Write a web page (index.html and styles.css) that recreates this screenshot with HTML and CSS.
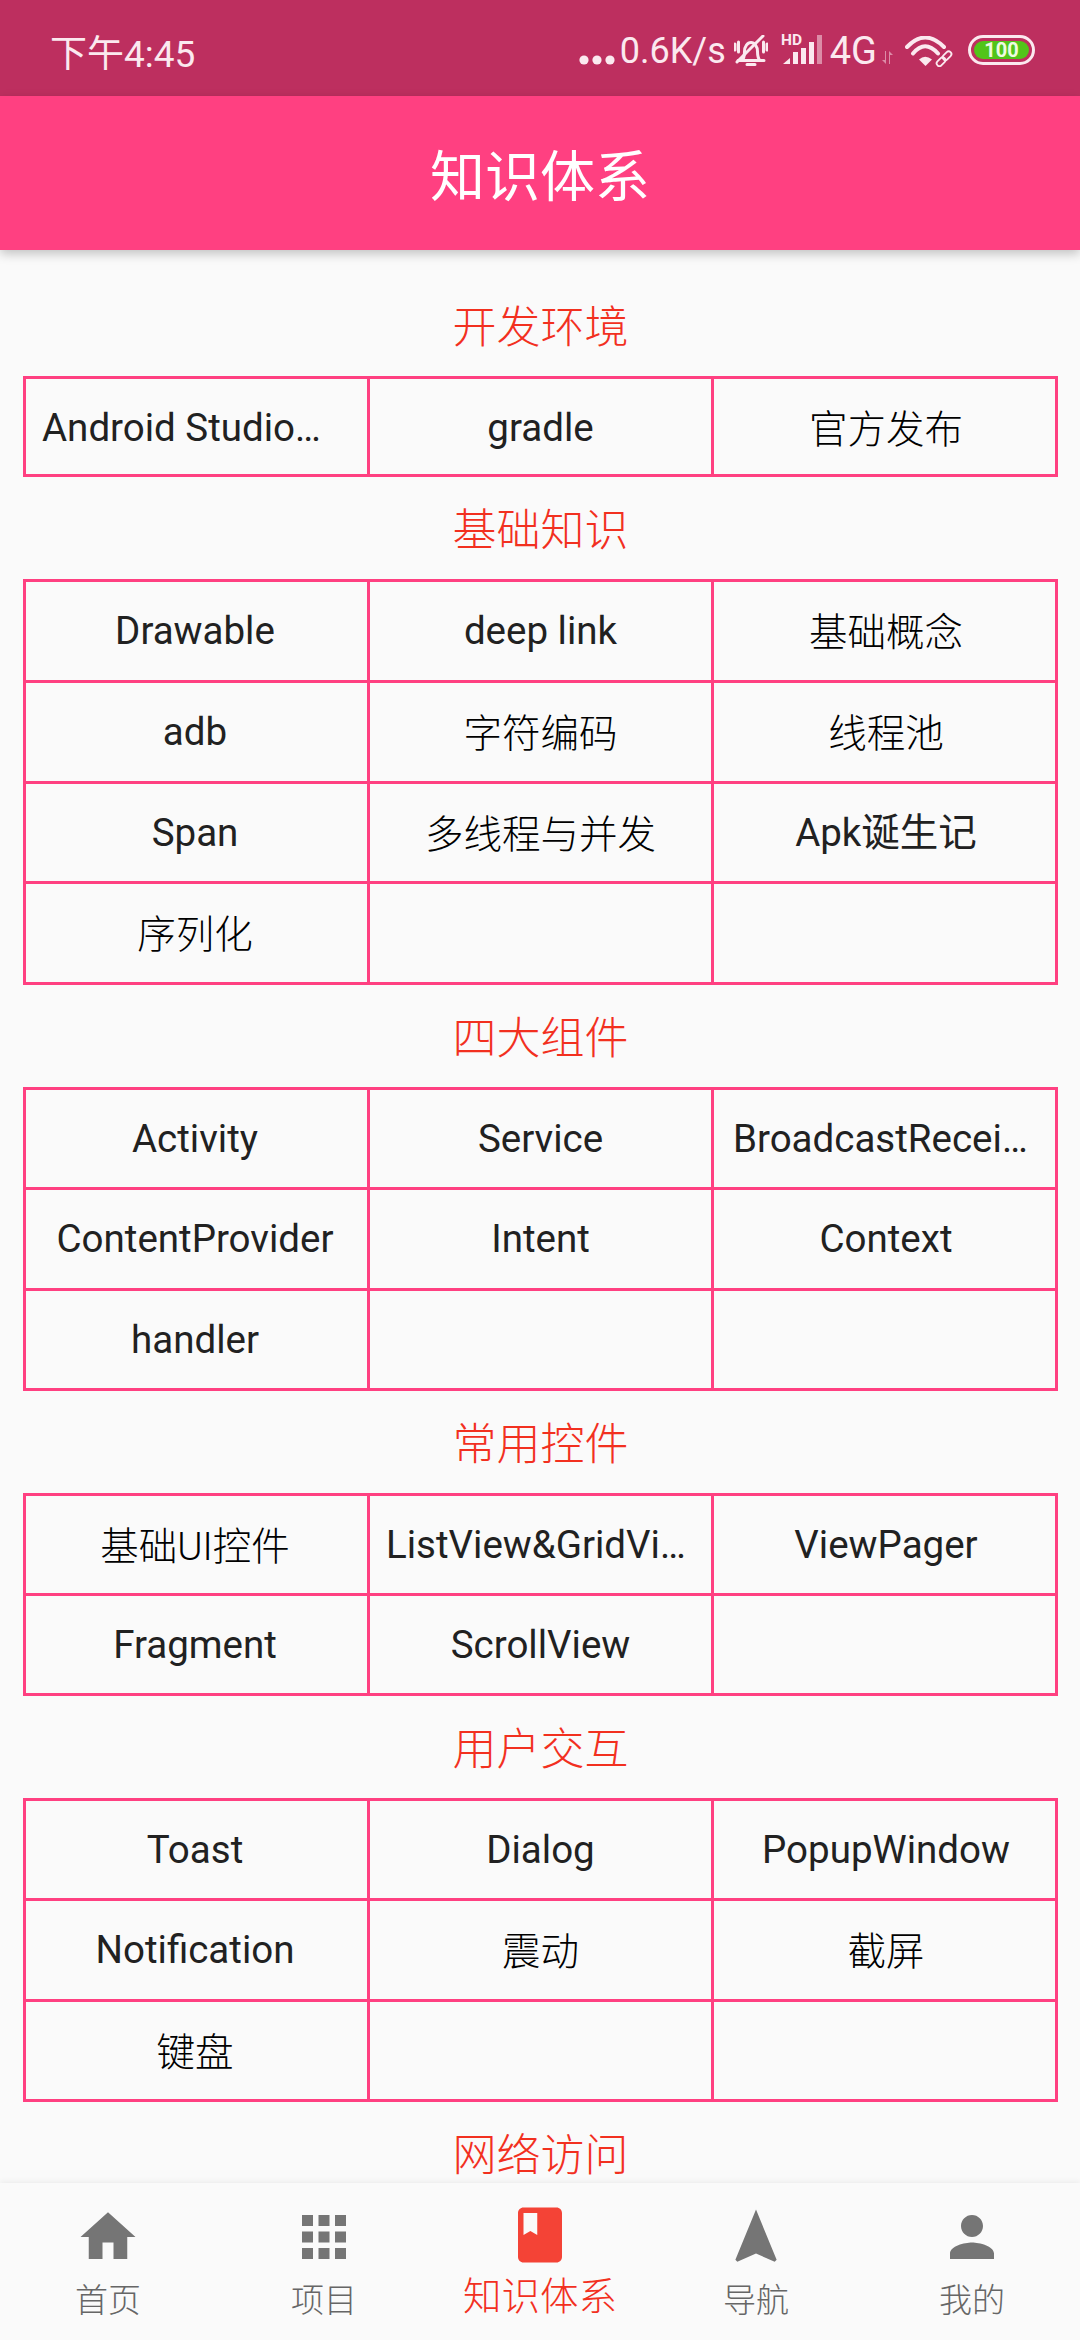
FILE: index.html
```html
<!DOCTYPE html>
<html lang="zh-CN">
<head>
  <meta charset="UTF-8">
  <title>知识体系</title>
  <link rel="stylesheet" href="styles.css">
</head>
<body>

<div class="status">
  <span class="clock">下午4:45</span>
  <div class="status-right">
    <svg class="dots" width="36" height="10" viewBox="0 0 36 10"><circle cx="5" cy="5" r="4.6"/><circle cx="18" cy="5" r="4.6"/><circle cx="31" cy="5" r="4.6"/></svg>
    <span class="speed">0.6K/s</span>
    <svg class="bell" width="34" height="33" viewBox="0 0 34 33">
      <path class="line" d="M4 25.500h26M8 25.500c2-2 2.500-5 2.500-9 0-5 3-9 6.500-9s6.500 4 6.500 9c0 4 .5 7 2.500 9M13 29.500h8"/>
      <path class="line" d="M3 27L29 1M1 9v6M4.500 7v10M33 9v6M29.500 7v10"/>
    </svg>
    <svg class="signal" width="42" height="36" viewBox="0 -5 42 36">
      <text class="hd" x="0" y="11">HD</text>
      <path d="M2 30l7-6v6z"/>
      <rect x="12" y="18" width="5" height="12"/>
      <rect x="20" y="14" width="5" height="16"/>
      <rect x="28" y="8" width="5" height="22"/>
      <rect class="faint" x="36" y="1" width="5" height="29"/>
    </svg>
    <span class="net">4G</span>
    <svg class="arrows" width="12" height="13" viewBox="0 0 12 13">
      <path class="faint" d="M3 0v9H0l4 4V0zM8 13V4h3L7 0v13z"/>
    </svg>
    <svg class="wifi" width="50" height="31" viewBox="0 0 50 31">
      <path class="wave" d="M2 11Q20-8 39 11M8 17.500Q20 3 33 17.500"/>
      <path d="M14 23.500Q20 18 27 23.500L20.500 30z"/>
      <g class="line thin">
        <rect x="31" y="23" width="10" height="5.500" rx="2.700" transform="rotate(-45 36 25.700)"/>
        <rect x="37" y="17" width="10" height="5.500" rx="2.700" transform="rotate(-45 42 19.700)"/>
      </g>
    </svg>
    <div class="battery"><span class="battery-level">100</span></div>
  </div>
</div>

<div class="appbar">知识体系</div>

<div class="list">

  <div class="section-title">开发环境</div>
  <div class="table rows-1">
    <div class="cell cut">Android Studio…</div>
    <div class="cell">gradle</div>
    <div class="cell cjk">官方发布</div>
  </div>

  <div class="section-title">基础知识</div>
  <div class="table rows-4">
    <div class="cell">Drawable</div>
    <div class="cell">deep link</div>
    <div class="cell cjk">基础概念</div>
    <div class="cell">adb</div>
    <div class="cell cjk">字符编码</div>
    <div class="cell cjk">线程池</div>
    <div class="cell">Span</div>
    <div class="cell cjk">多线程与并发</div>
    <div class="cell">Apk诞生记</div>
    <div class="cell cjk">序列化</div>
    <div class="cell"></div>
    <div class="cell"></div>
  </div>

  <div class="section-title">四大组件</div>
  <div class="table rows-3">
    <div class="cell">Activity</div>
    <div class="cell">Service</div>
    <div class="cell cut">BroadcastRecei…</div>
    <div class="cell">ContentProvider</div>
    <div class="cell">Intent</div>
    <div class="cell">Context</div>
    <div class="cell">handler</div>
    <div class="cell"></div>
    <div class="cell"></div>
  </div>

  <div class="section-title">常用控件</div>
  <div class="table rows-2">
    <div class="cell cjk">基础UI控件</div>
    <div class="cell cut">ListView&amp;GridVi…</div>
    <div class="cell">ViewPager</div>
    <div class="cell">Fragment</div>
    <div class="cell">ScrollView</div>
    <div class="cell"></div>
  </div>

  <div class="section-title">用户交互</div>
  <div class="table rows-3">
    <div class="cell">Toast</div>
    <div class="cell">Dialog</div>
    <div class="cell">PopupWindow</div>
    <div class="cell">Notification</div>
    <div class="cell cjk">震动</div>
    <div class="cell cjk">截屏</div>
    <div class="cell cjk">键盘</div>
    <div class="cell"></div>
    <div class="cell"></div>
  </div>

  <div class="section-title">网络访问</div>

</div>

<div class="nav">
  <div class="nav-item">
    <svg class="nav-icon" viewBox="0 0 24 24"><path d="M10 20v-6h4v6h5v-8h3L12 3 2 12h3v8z"/></svg>
    <span class="nav-label">首页</span>
  </div>
  <div class="nav-item">
    <svg class="nav-icon" viewBox="0 0 24 24"><path d="M4 8h4V4H4v4zm6 12h4v-4h-4v4zm-6 0h4v-4H4v4zm0-6h4v-4H4v4zm6 0h4v-4h-4v4zm6-10v4h4V4h-4zm-6 4h4V4h-4v4zm6 6h4v-4h-4v4zm0 6h4v-4h-4v4z"/></svg>
    <span class="nav-label">项目</span>
  </div>
  <div class="nav-item active">
    <svg class="nav-icon" viewBox="0 0 24 24"><path d="M18 2H6c-1.100 0-2 .9-2 2v16c0 1.100.9 2 2 2h12c1.100 0 2-.9 2-2V4c0-1.100-.9-2-2-2zM6 4h5v8l-2.500-1.500L6 12V4z"/></svg>
    <span class="nav-label">知识体系</span>
  </div>
  <div class="nav-item">
    <svg class="nav-icon" viewBox="0 0 24 24"><path d="M12 2L4.500 20.290l.71.71L12 18l6.790 3 .71-.71z"/></svg>
    <span class="nav-label">导航</span>
  </div>
  <div class="nav-item">
    <svg class="nav-icon" viewBox="0 0 24 24"><path d="M12 12c2.210 0 4-1.790 4-4s-1.790-4-4-4-4 1.790-4 4 1.790 4 4 4zm0 2c-2.670 0-8 1.340-8 4v2h16v-2c0-2.660-5.330-4-8-4z"/></svg>
    <span class="nav-label">我的</span>
  </div>
</div>

</body>
</html>
```

FILE: styles.css
```css
html, body { margin: 0; height: 100%; }
body { width: 1080px; height: 2340px; display: flex; flex-direction: column; overflow: hidden; background-color: #fafafa; color: #212121; font-family: Roboto, "Noto Sans CJK SC", sans-serif; }

.status { height: 96px; flex: none; display: flex; align-items: center; justify-content: space-between; padding: 6px 45px 0 50px; box-sizing: border-box; background-color: #bd2f5f; color: #fbe9ef; font-size: 36px; }
.status-right { display: flex; align-items: center; }
.status svg { display: block; fill: #fbe9ef; }
.status .line { fill: none; stroke: #fbe9ef; stroke-width: 3; stroke-linecap: round; }
.status .thin { stroke-width: 1.800; }
.status .wave { fill: none; stroke: #fbe9ef; stroke-width: 4; stroke-linecap: round; }
.status .faint { opacity: 0.5; }
.clock { font-size: 37px; }
.hd { font-size: 15.500px; font-weight: 700; font-family: Roboto, sans-serif; }
.dots { margin-top: 17px; }
.speed { margin-left: 5px; }
.bell { margin-left: 8px; }
.signal { margin-left: 13px; margin-top: -8px; }
.net { margin-left: 7px; font-size: 38px; }
.arrows { margin-left: 5px; margin-top: 13px; }
.wifi { margin-left: 11px; margin-top: 1px; }
.battery { width: 67px; height: 30px; margin-left: 13px; margin-top: -3px; box-sizing: border-box; border: 3px solid #fbe9ef; border-radius: 15px; padding: 3px; display: flex; }
.battery-level { flex: 1; border-radius: 9px; background-color: #52c41a; color: #eefbe0; font-size: 20px; font-weight: 700; line-height: 18px; text-align: center; }

.appbar { height: 154px; flex: none; display: flex; align-items: center; justify-content: center; padding-bottom: 2px; box-sizing: border-box; background-color: #ff4081; color: #fff; font-size: 55px; box-shadow: 0 4px 10px rgba(0, 0, 0, 0.22); position: relative; }

.list { flex: 1; min-height: 0; overflow: hidden; padding: 24px 22px 0 23px; }
.section-title { height: 102px; line-height: 108px; text-align: center; font-size: 44px; font-weight: 300; color: #f2301f; }

.table { display: grid; grid-template-columns: repeat(3, 341px); grid-auto-rows: 1fr; gap: 3px; padding: 3px; box-sizing: border-box; background-color: #ff4081; }
.rows-1 { height: 101px; }
.rows-2 { height: 203px; }
.rows-3 { height: 304px; }
.rows-4 { height: 406px; }
.cell { background-color: #fafafa; font-size: 38.500px; text-align: center; padding: 0 16px; min-width: 0; white-space: nowrap; overflow: hidden; line-height: 97px; }
.cell:nth-child(3n+1) { padding-right: 19px; }
.cell:nth-child(3n) { padding-left: 19px; }
.cjk { line-height: 101px; font-weight: 300; color: #000; }
.cut { text-align: left; }

.nav { height: 157px; flex: none; display: grid; grid-template-columns: repeat(5, 216px); background-color: #fafafa; box-shadow: 0 -1px 6px rgba(0, 0, 0, 0.07); position: relative; color: #666; }
.nav-item { display: flex; flex-direction: column; align-items: center; padding-top: 21px; }
.nav-icon { width: 66px; height: 66px; display: block; fill: #757575; }
.nav-label { font-size: 33px; line-height: 46px; margin-top: 8px; font-weight: 300; }
.active { color: #f2301f; padding-top: 19px; }
.active .nav-icon { fill: #f44336; }
.active .nav-label { font-size: 38.500px; margin-top: 6px; }
```
